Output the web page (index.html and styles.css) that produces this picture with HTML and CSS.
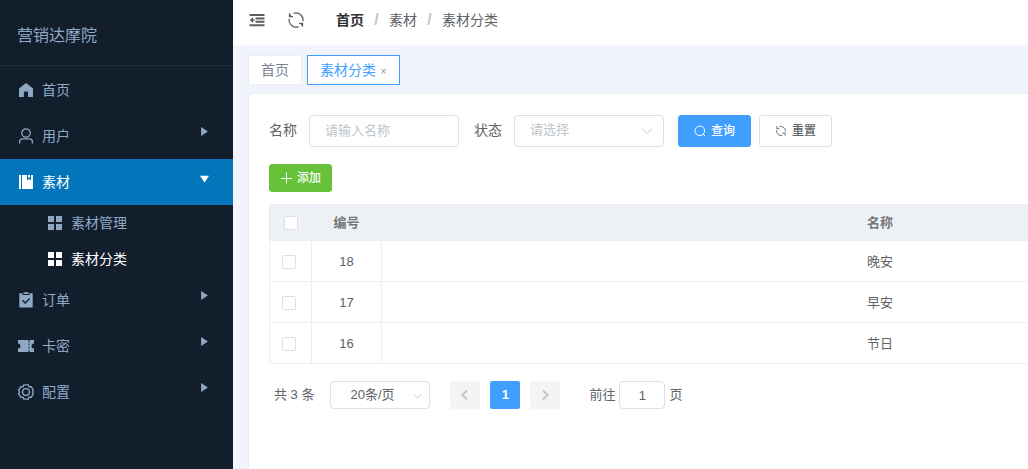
FILE: index.html
```html
<!DOCTYPE html>
<html lang="zh-CN">
<head>
<meta charset="utf-8">
<meta name="viewport" content="width=device-width, initial-scale=1">
<title>素材分类</title>
<link rel="stylesheet" href="styles.css">
</head>
<body>
<div class="app">
  <aside class="sidebar">
    <div class="brand">营销达摩院</div>
    <nav class="menu">
      <a class="menu-item" href="#home">
        <svg class="icon" viewBox="0 0 16 16"><path fill="currentColor" d="M8 1 1 6.600V15h4.900V9.600h4.200V15H15V6.600z"/></svg>
        <span>首页</span>
      </a>
      <a class="menu-item" href="#users">
        <svg class="icon" viewBox="0 0 16 16" fill="none" stroke="currentColor" stroke-width="1.300"><circle cx="8" cy="5" r="4.200"/><path d="M1.600 15.500v-1.700c0-1.800 1.200-3 3-3h6.800c1.800 0 3 1.200 3 3v1.700"/></svg>
        <span>用户</span>
        <svg class="arrow" viewBox="0 0 8 8"><path fill="currentColor" d="M1 0 7 4 1 8z"/></svg>
      </a>
      <a class="menu-item active" href="#material">
        <svg class="icon" viewBox="0 0 16 16"><path fill="currentColor" d="M1 1h2v14H1zM4 1h5v5.500l2-1.600 2 1.600V1h2v14H4zM10 1h2v3l-1-.8-1 .8z"/></svg>
        <span>素材</span>
        <svg class="arrow" viewBox="0 0 8 8"><path fill="currentColor" d="M0 1.500h8L4 7.500z"/></svg>
      </a>
      <div class="submenu">
        <a class="menu-item sub" href="#manage">
          <svg class="icon" viewBox="0 0 16 16"><path fill="currentColor" d="M1 1h6v6H1zM9 1h6v6H9zM1 9h6v6H1zM9 9h6v6H9z"/></svg>
          <span>素材管理</span>
        </a>
        <a class="menu-item sub current" href="#category">
          <svg class="icon" viewBox="0 0 16 16"><path fill="currentColor" d="M1 1h6v6H1zM9 1h6v6H9zM1 9h6v6H1zM9 9h6v6H9z"/></svg>
          <span>素材分类</span>
        </a>
      </div>
      <a class="menu-item" href="#orders">
        <svg class="icon" viewBox="0 0 16 16"><path fill="currentColor" fill-rule="evenodd" d="M1.300 1.200H4.500v1.800h7V1.200h3.200v14.300H1.300zM5.500.2h5v1.900h-5zM4.800 7.800 4 8.700l3.200 3.200 5-5-.9-.9-4.100 4.100z"/></svg>
        <span>订单</span>
        <svg class="arrow" viewBox="0 0 8 8"><path fill="currentColor" d="M1 0 7 4 1 8z"/></svg>
      </a>
      <a class="menu-item" href="#cards">
        <svg class="icon" viewBox="0 0 16 16"><path fill="currentColor" fill-rule="evenodd" d="M0 2h10.500v2h1V2H16v3.500a2.500 2.500 0 0 0 0 5V14h-4.500v-2h-1v2H0v-3.500a2.500 2.500 0 0 0 0-5zM10.500 5.300v2h1v-2zM10.500 8.700v2h1v-2z"/></svg>
        <span>卡密</span>
        <svg class="arrow" viewBox="0 0 8 8"><path fill="currentColor" d="M1 0 7 4 1 8z"/></svg>
      </a>
      <a class="menu-item" href="#config">
        <svg class="icon" viewBox="0 0 16 16" fill="none" stroke="currentColor" stroke-width="1.300" stroke-linejoin="round"><path d="M5.800.8h4.400l.8 2 2.200-.2 2.200 3.700L14.200 8l1.200 1.700-2.200 3.700-2.200-.2-.8 2H5.800l-.8-2-2.200.2L.6 9.700 1.800 8 .6 6.300l2.200-3.700 2.200.2z"/><circle cx="8" cy="8" r="3.400"/></svg>
        <span>配置</span>
        <svg class="arrow" viewBox="0 0 8 8"><path fill="currentColor" d="M1 0 7 4 1 8z"/></svg>
      </a>
    </nav>
  </aside>

  <main class="main">
    <header class="topbar">
      <button class="icon-button" type="button" aria-label="收起菜单">
        <svg class="icon" viewBox="0 0 16 16"><path fill="currentColor" d="M.5 2h15v2H.5zM6.500 5.400h9v2h-9zM6.500 8.800h9v2h-9zM.5 12.200h15v2H.5zM.7 8.100l3.300-2.900v2h1.500v1.800H4v2z"/></svg>
      </button>
      <button class="icon-button" type="button" aria-label="刷新">
        <svg class="icon" viewBox="0 0 16 16" fill="none" stroke="currentColor" stroke-width="1.300"><path d="M5.500 1.400A7 7 0 0 1 14.800 9.200M10.500 14.600A7 7 0 0 1 1.200 6.800M1.500 1.200v3.500H5M14.500 14.800v-3.500H11M1.700 4.500A7 7 0 0 1 3 3M14.300 11.500A7 7 0 0 1 13 13"/></svg>
      </button>
      <nav class="breadcrumb" aria-label="面包屑">
        <a class="crumb-home" href="#home">首页</a><i>/</i><span>素材</span><i>/</i><span>素材分类</span>
      </nav>
    </header>

    <div class="tabs">
      <a class="tab" href="#home">首页</a>
      <a class="tab selected" href="#category">素材分类<span class="close">×</span></a>
    </div>

    <section class="card">
      <form class="filters">
        <label for="name">名称</label>
        <input class="field" id="name" type="text" placeholder="请输入名称">
        <label for="status">状态</label>
        <div class="select-box">
          <select class="field placeholder" id="status"><option>请选择</option></select>
          <svg class="chevron" viewBox="0 0 12 12"><path d="m1 3.500 5 5 5-5"/></svg>
        </div>
        <div class="actions">
          <button class="button primary" type="button">
            <svg viewBox="0 0 12 12" fill="none" stroke="currentColor"><circle cx="5.800" cy="5.800" r="4.800"/><path d="m9.200 9.200 2 2"/></svg>查询
          </button>
          <button class="button" type="button">
            <svg viewBox="0 0 16 16" fill="none" stroke="currentColor" stroke-width="1.300"><path d="M6 2.300A6 6 0 0 1 13.800 9M10 13.700A6 6 0 0 1 2.200 7M2.500 1.800v3.300H6M13.500 14.200v-3.300H10"/></svg>重置
          </button>
        </div>
      </form>

      <button class="button success" type="button">
        <svg viewBox="0 0 12 12" fill="none" stroke="currentColor"><path d="M6.500.5v11M1 6.500h11"/></svg>添加
      </button>

      <div class="table-wrap">
        <table class="grid">
          <colgroup><col class="col-check"><col class="col-id"><col class="col-name"></colgroup>
          <thead>
            <tr><th><input class="check" type="checkbox" aria-label="全选"></th><th>编号</th><th>名称</th></tr>
          </thead>
          <tbody>
            <tr><td class="pick"><input class="check" type="checkbox" aria-label="选择 18"></td><td>18</td><td>晚安</td></tr>
            <tr><td class="pick"><input class="check" type="checkbox" aria-label="选择 17"></td><td>17</td><td>早安</td></tr>
            <tr><td class="pick"><input class="check" type="checkbox" aria-label="选择 16"></td><td>16</td><td>节日</td></tr>
          </tbody>
        </table>
      </div>

      <div class="pagination">
        <span>共 3 条</span>
        <div class="select-box page-size">
          <select class="field" aria-label="每页条数"><option>20条/页</option></select>
          <svg class="chevron" viewBox="0 0 12 12"><path d="m1.500 4 4.500 4.500L10.500 4"/></svg>
        </div>
        <div class="pager">
          <button class="page" type="button" disabled aria-label="上一页"><svg viewBox="0 0 12 12"><path d="M8 1.500 3.500 6 8 10.500"/></svg></button>
          <button class="page on" type="button">1</button>
          <button class="page" type="button" disabled aria-label="下一页"><svg viewBox="0 0 12 12"><path d="M4 1.500 8.500 6 4 10.500"/></svg></button>
        </div>
        <div class="jump">
          <label for="jump">前往</label>
          <input class="field" id="jump" type="text" value="1">
          <span>页</span>
        </div>
      </div>
    </section>
  </main>
</div>
</body>
</html>
```
FILE: styles.css
```css
* { box-sizing: border-box; }

body {
  margin: 0;
  font: 14px/20px "Liberation Sans", "Noto Sans CJK SC", sans-serif;
  color: #606266;
  background: #f1f4fd;
}

a { color: inherit; text-decoration: none; }
button, input, select { font: inherit; color: inherit; margin: 0; }
svg { display: block; flex: none; }

.app { display: flex; min-height: 100vh; }

/* Sidebar */
.sidebar { flex: none; width: 233px; background: #131e2d; color: #8fa9c5; }
.brand {
  height: 66px;
  padding: 24px 17px 0;
  border-bottom: 1px solid #1b2b3a;
  font-size: 16px;
  line-height: 24px;
}
.menu { padding-top: 1px; }
.menu-item { display: flex; align-items: center; gap: 8px; height: 46px; padding: 0 24px 0 18px; }
.icon { width: 16px; height: 16px; }
.arrow { width: 9px; height: 9px; margin: 0 0 9px auto; }
.menu-item.active { background: #0376bb; color: #fff; }
.active .arrow { margin-bottom: 8px; }
.menu-item.sub { height: 36px; padding-left: 47px; }
.menu-item.current { color: #fff; }

/* Header */
.main { flex: 1; min-width: 0; display: flex; flex-direction: column; overflow: hidden; }
.topbar { display: flex; align-items: center; height: 45px; padding: 0 16px 5px; background: #fff; }
.icon-button { padding: 0; border: 0; background: none; margin-right: 23px; color: #5a5e66; }
.breadcrumb { display: flex; margin-left: 9px; }
.breadcrumb i { width: 25px; font-style: normal; font-size: 16px; font-weight: 700; color: #c0c4cc; text-align: center; }
.crumb-home { font-weight: 700; color: #303133; }

.tabs { display: flex; gap: 5px; padding: 10px 15px 8px; }
.tab { height: 30px; padding: 0 12px; border: 1px solid #ebeef5; background: #fff; line-height: 28px; color: #7d8292; }
.tab.selected { border-color: #409eff; color: #409eff; }
.close { display: inline-block; width: 7px; margin-left: 4px; font-size: 10px; line-height: 12px; text-align: center; color: #909399; }

/* Content card */
.card { flex: 1; margin-left: 15px; padding: 21px 20px; border: solid #ebeef5; border-width: 1px 0 0 1px; border-radius: 4px 0 0 0; background: #fff; }
.filters { display: flex; align-items: center; }
.filters label { margin-right: 12px; line-height: 18px; padding-bottom: 2px; }
.field { display: block; border: 1px solid #dcdfe6; border-radius: 4px; background: #fff; outline: 0; appearance: none; }
.filters .field { width: 150px; height: 32px; padding: 0 15px 2px; font-size: 13px; }
.filters > .field { margin-right: 15px; }
.field::placeholder, .placeholder { color: #c0c4cc; }
.select-box { position: relative; }
.chevron { position: absolute; right: 11px; top: 10px; width: 12px; height: 12px; fill: none; stroke: #c0c4cc; pointer-events: none; }
.actions { display: flex; gap: 8px; margin-left: 14px; }
.button {
  display: flex;
  align-items: center;
  justify-content: center;
  gap: 5px;
  height: 32px;
  padding: 0 15px;
  border: 1px solid #dcdfe6;
  border-radius: 3px;
  background: #fff;
  font-size: 12px;
  font-weight: 500;
}
.button svg { width: 12px; height: 12px; }
.primary { border-color: #409eff; background: #409eff; color: #fff; }
.success { height: 28px; margin-top: 17px; padding: 0 10px; border-color: #67c23a; background: #67c23a; color: #fff; }

/* Table */
.table-wrap { margin: 12px -20px 0 0; overflow: hidden; }
.grid { width: 1110px; table-layout: fixed; border-collapse: collapse; font-size: 13px; text-align: center; }
.col-check { width: 42px; }
.col-id { width: 70px; }
.grid th, .grid td { height: 41px; padding: 0; border: 1px solid #ebeef5; }
.grid td { padding-top: 2px; }
.grid th { height: 36px; background: #edf1f6; font-weight: 700; color: #777; }
.check { display: block; width: 14px; height: 14px; margin: 0 auto; border: 1px solid #dcdfe6; border-radius: 2px; background: #fff; appearance: none; }
.pick .check { margin-left: 12px; }

/* Pagination */
.pagination { display: flex; align-items: center; margin-top: 17px; padding-left: 5px; font-size: 13px; }
.pagination .field { height: 28px; }
.page-size { margin: 0 20px 0 16px; }
.page-size .field { width: 100px; padding: 0 16px 0 0; text-align: center; text-align-last: center; }
.page-size .chevron { top: 9px; right: 7px; width: 11px; }
.pager { display: flex; gap: 10px; }
.page { display: grid; place-items: center; width: 30px; height: 28px; padding: 0; border: 0; border-radius: 2px; background: #f4f4f5; color: #c0c4cc; font-weight: 700; }
.page svg { width: 12px; height: 12px; fill: none; stroke: currentColor; stroke-width: 2; }
.page.on { background: #409eff; color: #fff; }
.jump { display: flex; align-items: center; gap: 4px; margin-left: 29px; }
.jump .field { width: 46px; padding: 0; text-align: center; }
```
